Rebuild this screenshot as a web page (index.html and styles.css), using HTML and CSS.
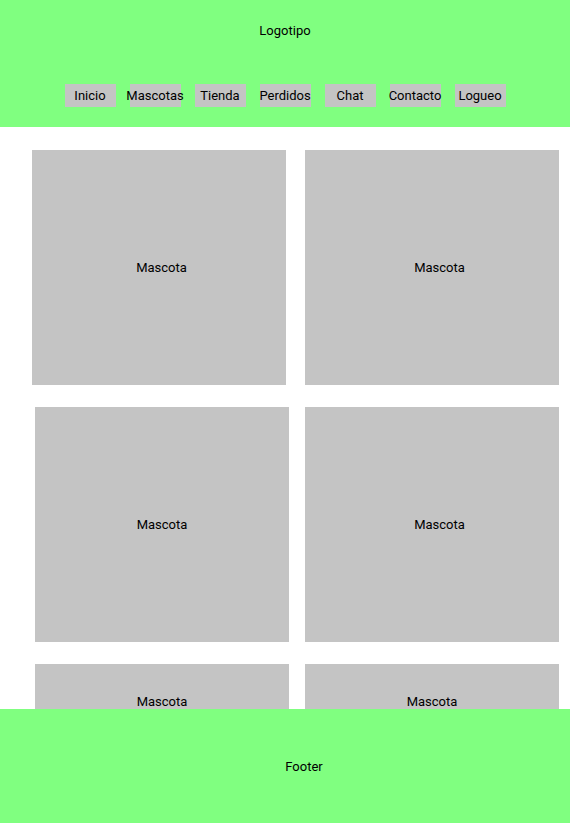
FILE: index.html
```html
<!DOCTYPE html>
<html lang="es">
<head>
    <meta charset="UTF-8">
    <meta name="viewport" content="width=device-width, initial-scale=1.0">
    <title>Mascotas</title>
    <link rel="stylesheet" href="styles.css">
</head>
<body>
    <header class="site-header">
        <div class="logo">Logotipo</div>
        <nav class="nav">
            <a class="nav-item" href="#">Inicio</a>
            <a class="nav-item" href="#">Mascotas</a>
            <a class="nav-item" href="#">Tienda</a>
            <a class="nav-item" href="#">Perdidos</a>
            <a class="nav-item" href="#">Chat</a>
            <a class="nav-item" href="#">Contacto</a>
            <a class="nav-item" href="#">Logueo</a>
        </nav>
    </header>

    <main class="pets">
        <div class="pet-row pet-row-first">
            <div class="pet-card pet-card-nudge">Mascota</div>
            <div class="pet-card pet-card-offset">Mascota</div>
        </div>
        <div class="pet-row">
            <div class="pet-card">Mascota</div>
            <div class="pet-card pet-card-offset">Mascota</div>
        </div>
        <div class="pet-row pet-row-short">
            <div class="pet-card">Mascota</div>
            <div class="pet-card">Mascota</div>
        </div>
    </main>

    <footer class="site-footer">
        <span class="footer-text">Footer</span>
    </footer>
</body>
</html>
```

FILE: styles.css
```css
* {
    margin: 0;
    padding: 0;
    box-sizing: border-box;
    font-family: Roboto, 'Liberation Sans', sans-serif;
}

body {
    background-color: #fff;
    color: #000;
    font-size: 13px;
}

.site-header {
    background-color: #80ff80;
    height: 127px;
}

.logo {
    height: 61px;
    line-height: 61px;
    text-align: center;
}

.nav {
    display: flex;
    justify-content: center;
    gap: 14px;
    margin-top: 23px;
}

.nav-item {
    display: flex;
    justify-content: center;
    width: 51px;
    height: 23px;
    line-height: 23px;
    background-color: #c4c4c4;
    color: #000;
    text-decoration: none;
    white-space: nowrap;
}

.pets {
    display: flex;
    flex-direction: column;
    gap: 22px;
    padding: 23px 11px 40px 35px;
}

.pet-row {
    display: flex;
    gap: 16px;
}

.pet-row-first {
    gap: 19px;
    margin-left: -3px;
}

.pet-card {
    display: flex;
    align-items: center;
    justify-content: center;
    width: 254px;
    height: 235px;
    background-color: #c4c4c4;
}

.pet-card-nudge {
    padding-left: 5px;
}

.pet-card-offset {
    padding-left: 15px;
}

.pet-row-short .pet-card {
    height: 74px;
}

.site-footer {
    position: fixed;
    left: 0;
    right: 0;
    bottom: 0;
    height: 114px;
    display: flex;
    align-items: center;
    justify-content: center;
    padding-left: 38px;
    background-color: #80ff80;
}
```
